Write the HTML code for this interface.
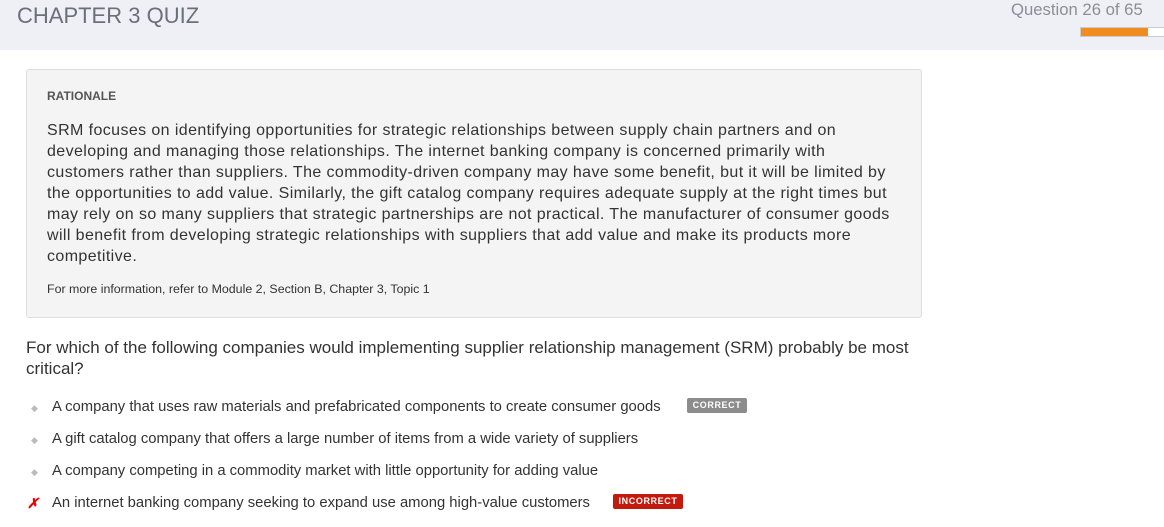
<!DOCTYPE html>
<html><head><meta charset="utf-8"><style>
body{margin:0;width:1164px;height:527px;overflow:hidden;background:#fff;font-family:"Liberation Sans",sans-serif;color:#333;position:relative}
.hdr{position:absolute;left:0;top:0;width:1164px;height:50px;background:#eff0f5}
.title{position:absolute;left:17px;top:3px;font-size:22px;color:#6b6f78}
.qn{position:absolute;left:1011px;top:0px;font-size:16.7px;color:#8a8e96}
.bar{position:absolute;left:1080px;top:27px;width:90px;height:8px;background:#fff;border:1px solid #ccc}
.bar div{width:67px;height:8px;background:#f28c1e}
.box{position:absolute;left:26px;top:69px;width:894px;height:247px;background:#f4f4f4;border:1px solid #dedede;border-radius:3px}
.rl{position:absolute;left:20px;top:19px;font-size:12px;font-weight:bold;color:#555}
.rt{position:absolute;left:20px;top:50px;font-size:16px;letter-spacing:0.4px;line-height:21px;color:#333;white-space:nowrap}
.more{position:absolute;left:20px;top:212px;font-size:12.4px;color:#333}
.q{position:absolute;left:26px;top:337px;font-size:17px;line-height:21px;color:#333;white-space:nowrap}
.opt{position:absolute;left:52px;font-size:14.8px;color:#333;white-space:nowrap}
.dot{position:absolute;left:31px;font-size:9px;color:#bbb}
.x{position:absolute;left:27px;top:495px;color:#e00;font-size:14px;font-style:italic;font-weight:bold}
.tag{position:absolute;font-size:9px;font-weight:bold;color:#fff;letter-spacing:0.6px;text-align:center;line-height:15px;height:15px;border-radius:2px}
</style></head><body>
<div class="hdr"></div>
<div class="title">CHAPTER 3 QUIZ</div>
<div class="qn">Question 26 of 65</div>
<div class="bar"><div></div></div>
<div class="box">
<div class="rl">RATIONALE</div>
<div class="rt">SRM focuses on identifying opportunities for strategic relationships between supply chain partners and on<br>developing and managing those relationships. The internet banking company is concerned primarily with<br>customers rather than suppliers. The commodity-driven company may have some benefit, but it will be limited by<br>the opportunities to add value. Similarly, the gift catalog company requires adequate supply at the right times but<br>may rely on so many suppliers that strategic partnerships are not practical. The manufacturer of consumer goods<br>will benefit from developing strategic relationships with suppliers that add value and make its products more<br>competitive.</div>
<div class="more">For more information, refer to Module 2, Section B, Chapter 3, Topic 1</div>
</div>
<div class="q">For which of the following companies would implementing supplier relationship management (SRM) probably be most<br>critical?</div>
<div class="dot" style="top:403px">◆</div><div class="opt" style="top:399px">A company that uses raw materials and prefabricated components to create consumer goods</div>
<div class="tag" style="left:687px;top:398px;width:60px;background:#8c8c8c">CORRECT</div>
<div class="dot" style="top:435px">◆</div><div class="opt" style="top:431px">A gift catalog company that offers a large number of items from a wide variety of suppliers</div>
<div class="dot" style="top:467px">◆</div><div class="opt" style="top:463px">A company competing in a commodity market with little opportunity for adding value</div>
<div class="x">✗</div><div class="opt" style="top:495px">An internet banking company seeking to expand use among high-value customers</div>
<div class="tag" style="left:613px;top:494px;width:70px;background:#c41a0e">INCORRECT</div>
</body></html>
